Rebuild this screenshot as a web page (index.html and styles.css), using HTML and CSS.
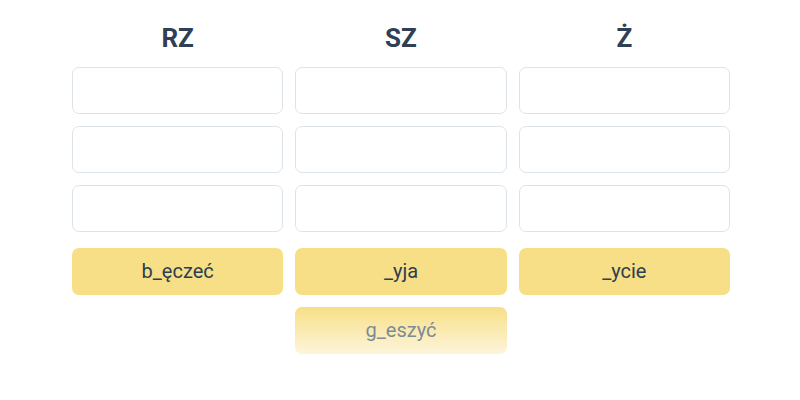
FILE: index.html
```html
<!DOCTYPE html>
<html lang="pl">
<head>
    <meta charset="UTF-8">
    <meta name="viewport" content="width=device-width, initial-scale=1.0">
    <title>RZ, SZ, Ż</title>
    <link rel="stylesheet" href="styles.css">
</head>
<body>
    <div class="board">
        <div class="column">
            <h2>RZ</h2>
            <div class="slot"></div>
            <div class="slot"></div>
            <div class="slot"></div>
            <div class="tile first">b_ęczeć</div>
        </div>
        <div class="column">
            <h2>SZ</h2>
            <div class="slot"></div>
            <div class="slot"></div>
            <div class="slot"></div>
            <div class="tile first">_yja</div>
            <div class="tile faded">g_eszyć</div>
        </div>
        <div class="column">
            <h2>Ż</h2>
            <div class="slot"></div>
            <div class="slot"></div>
            <div class="slot"></div>
            <div class="tile first">_ycie</div>
        </div>
    </div>
</body>
</html>
```

FILE: styles.css
```css
body {
    margin: 0;
    font-family: Roboto, "Noto Sans", Arial, sans-serif;
    background: #fff;
    color: #2d3e50;
}
.board {
    display: grid;
    grid-template-columns: repeat(3, 1fr);
    gap: 12px;
    width: 658px;
    margin-left: 72px;
    padding-top: 20px;
}
.column {
    display: flex;
    flex-direction: column;
    gap: 12px;
}
.column h2 {
    margin: 0;
    height: 35px;
    line-height: 37px;
    text-align: center;
    font-size: 26px;
    font-weight: 700;
    color: #2f4054;
}
.slot {
    height: 45px;
    border: 1px solid #dde4e9;
    border-radius: 7px;
    background: #fff;
}
.tile {
    height: 47px;
    line-height: 47px;
    border-radius: 7px;
    background: #f7df87;
    text-align: center;
    font-size: 20px;
    color: #2d3e50;
}
.tile.first {
    margin-top: 4px;
}
.tile.faded {
    background: linear-gradient(#f7df87, #fdf5da);
    color: #7d8b98;
}
```
